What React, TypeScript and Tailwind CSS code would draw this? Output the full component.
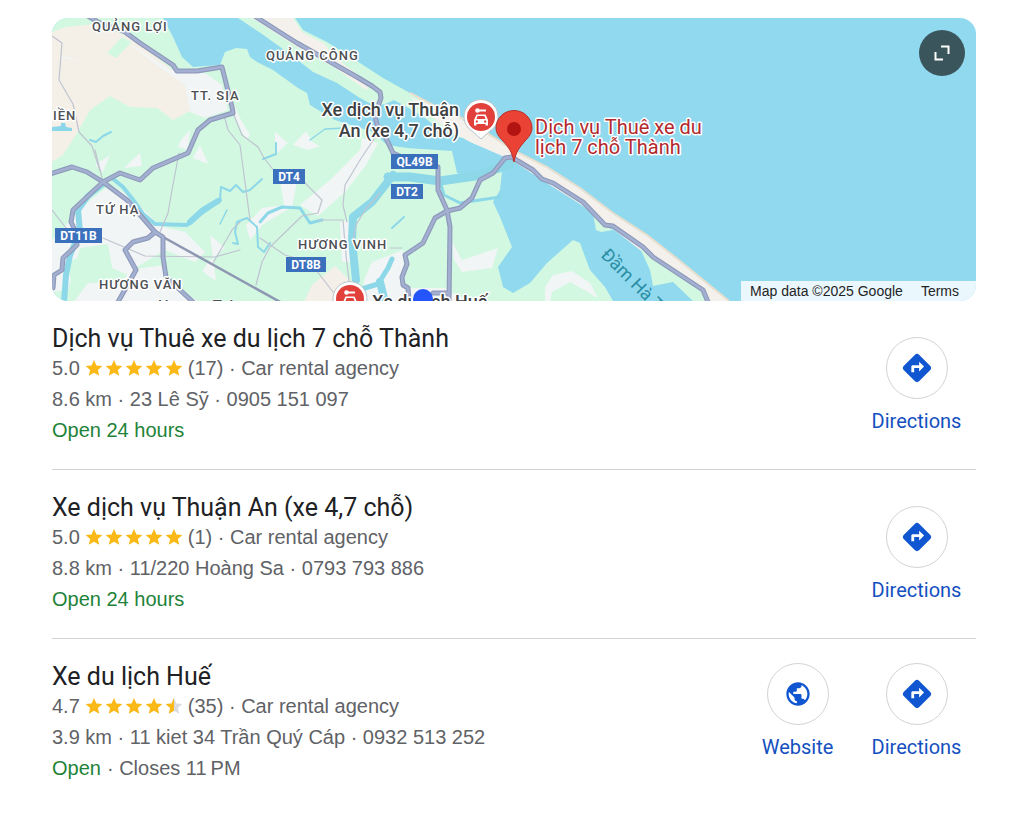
import type { ReactNode } from "react";
import { MdDirections, MdPublic } from "react-icons/md";

const TITLE_FONT = "font-['Roboto','Liberation_Sans',sans-serif]";

type Place = {
  name: string;
  rating: number;
  reviews: number;
  category: string;
  details: string;
  open: string;
  closes?: string;
  website?: boolean;
};

const places: Place[] = [
  {
    name: "Dịch vụ Thuê xe du lịch 7 chỗ Thành",
    rating: 5,
    reviews: 17,
    category: "Car rental agency",
    details: "8.6 km · 23 Lê Sỹ · 0905 151 097",
    open: "Open 24 hours",
  },
  {
    name: "Xe dịch vụ Thuận An (xe 4,7 chỗ)",
    rating: 5,
    reviews: 1,
    category: "Car rental agency",
    details: "8.8 km · 11/220 Hoàng Sa · 0793 793 886",
    open: "Open 24 hours",
  },
  {
    name: "Xe du lịch Huế",
    rating: 4.7,
    reviews: 35,
    category: "Car rental agency",
    details: "3.9 km · 11 kiet 34 Trần Quý Cáp · 0932 513 252",
    open: "Open",
    closes: "Closes 11\u2009PM",
    website: true,
  },
];

const highways = [
  "M88,16 L98,22 125,32 140,43 173,65 177,71 197,71 222,67 227,87 232,107 233,113 210,120 198,130 188,153 153,168 140,180 120,173 103,182 73,210 71,222 75,230 77,245 63,258 62,270 54,275 53,288",
  "M50,174 L72,167 87,172 103,182 127,200 155,232 163,237 163,257 166,277 193,302",
  "M155,232 L148,238 133,242 125,250 136,270 118,302",
  "M256,17 L278,31 297,43 327,60 357,77 372,86 380,92 381,98 375,115 377,125 385,136 393,153 408,160 438,167 438,190 447,210 450,227 449,302",
  "M512,157 L505,158 493,173 480,180 472,198 460,208 447,211 435,218 423,243 405,255 407,264 402,277 403,285 408,288 409,300",
  "M433,293 H449",
  "M513,158 L533,170 542,179 553,183 583,202 605,225 613,226 643,247 653,257 703,290 708,302",
];

const lanes = [
  "M52,36 L62,43 59,80 73,104 79,132 92,146 100,171",
  "M224,115 L228,130 240,145 246,190 250,220",
  "M233,113 L242,135 258,147 264,158 275,172",
  "M179,153 L172,190 168,213 160,232",
  "M103,238 L145,256 215,257 240,250",
  "M213,263 L232,230 240,222",
  "M256,285 L262,262 270,247 302,216 318,213 322,200 308,186 296,172",
  "M318,220 H343 L346,255 350,290",
  "M378,133 L360,160 345,185 343,205 347,222",
  "M260,238 L285,255 310,262 333,292",
  "M380,193 L365,210 356,225 352,245",
  "M95,150 L103,182",
  "M390,248 H402",
  "M52,210 L66,228 M100,236 L90,232",
];

const streams = [
  { d: "M112,178 L123,187 134,201 143,214 155,224 187,225 203,212 220,200", w: 4 },
  { d: "M190,222 L203,210 218,201", w: 6 },
  { d: "M220,200 L221,187 230,191 236,185 243,192 250,190 262,179", w: 2 },
  { d: "M103,184 L88,196 78,210 80,232 70,255 66,275 64,302", w: 6 },
  { d: "M233,243 L238,244 235,232 237,222 247,218 257,227 258,247 264,252 270,243", w: 2 },
  { d: "M260,222 L268,213 282,207 300,208 310,223 322,220", w: 3 },
  { d: "M90,140 L96,142 103,136 111,132", w: 2 },
  { d: "M263,159 L276,154 276,143", w: 2 },
  { d: "M310,140 L325,129 345,128", w: 1.5 },
  { d: "M392,228 L404,217", w: 2 },
  { d: "M220,224 L227,210", w: 1.5 },
  { d: "M393,175 L372,202 353,217 352,240 356,280", w: 8 },
  { d: "M388,177 L410,177 440,181 475,176 510,164", w: 9 },
  { d: "M440,181 L444,195 460,203 500,197", w: 3 },
  { d: "M356,280 L353,292 M362,289 L378,284 388,268 392,259", w: 5 },
  { d: "M380,282 L385,302", w: 8 },
];

const towns = [
  "60,58 64,56 80,60",
  "125,40 170,70 205,73 222,85 228,110 205,118 190,112 185,85 150,60",
  "230,95 240,118 250,135 246,140 236,120",
  "181,140 190,130 188,150 178,147",
  "200,145 208,164 193,158",
  "275,132 288,143 275,155",
  "293,145 306,131 312,142 320,146 308,150",
  "52,240 90,200 110,185 130,196 160,226 185,232 205,252 195,262 165,250 125,274 112,268 108,244 80,248 68,290 52,292",
  "124,168 140,153 142,166",
  "280,180 297,182 292,207 262,225 250,240 246,225 262,208 284,205",
  "300,205 330,180 360,150 362,138 378,143 366,165 345,192 318,216",
  "210,235 225,248 208,262 200,275 216,280",
  "452,242 462,260 498,248 492,268 462,272 454,260",
  "545,302 545,287 553,275 572,271 590,283 598,298 570,282 552,292 550,302",
  "364,280 372,262 403,250 405,288 445,288 470,302 364,302",
  "340,222 350,220 350,262 342,262",
  "74,302 90,280 110,285 130,275 160,280 200,302",
  "95,165 110,155 103,172",
  "128,270 165,265 172,290 150,302 120,302",
];

const greens = [
  "66,262 108,248 112,268 125,274 112,282 72,284",
  "60,184 92,176 100,184 78,202 62,208 52,200 52,186",
  "172,262 196,266 216,282 236,290 250,301 200,301 176,282",
];

function Shield({ x, y, width, text }: { x: number; y: number; width: number; text: string }) {
  return (
    <g>
      <rect x={x} y={y} width={width} height={15} fill="#3b70bd" />
      <text x={x + width / 2} y={y + 12} textAnchor="middle" fontSize={12} fontWeight={700} fill="#fff">
        {text}
      </text>
    </g>
  );
}

function CarMarker({ x, y }: { x: number; y: number }) {
  return (
    <g transform={`translate(${x} ${y})`}>
      <path d="M0,22 L-9,14 A17,17 0 1 1 9,14 Z" fill="#fff" stroke="#b9c5c9" />
      <circle r="14" fill="#e2413b" />
      <g fill="#fff">
        <circle cx="-3.5" cy="-6.5" r="2.3" />
        <path d="M-2,-7.5 H5 V-5.500 H-2 Z" />
        <path
          fillRule="evenodd"
          d="M-4.5,-2.5 H4.5 L7,3 V8.5 H4.5 V7 H-4.5 V8.5 H-7 V3 Z M-3.3,-1 L-4.6,2 H4.6 L3.3,-1 Z M-4.2,3.3 a1.2,1.2 0 1 0 0.01,0 Z M4.2,3.3 a1.2,1.2 0 1 0 0.01,0 Z"
        />
      </g>
    </g>
  );
}

function MapDrawing() {
  return (
    <svg
      viewBox="52 18 924 283"
      preserveAspectRatio="xMidYMid slice"
      role="img"
      aria-label="Map of car rental agencies"
      className="block w-full font-['Roboto',sans-serif]"
    >
      <rect x="52" y="18" width="924" height="283" fill="#91d9ee" />
      <path
        fill="#d2f8e2"
        d="M52,18 H163 L173,37 182,57 193,67 220,65 225,52 236,48 247,49 250,57 257,62 273,70 298,88 307,93 310,105 335,120 373,132 387,145 407,148 452,151 457,173 473,178 502,172 500,190 493,202 500,217 512,247 498,267 503,287 513,293 530,283 547,263 573,240 580,243 590,270 605,287 613,301 H52 Z"
      />
      <path
        fill="#f4f0e8"
        d="M52,32 L66,27 95,24 125,35 150,52 175,72 192,80 210,100 190,111 173,120 157,108 130,107 110,96 90,110 77,133 63,155 52,162 Z"
      />
      <path fill="#d2f8e2" d="M107,53 L122,37 132,42 116,58 Z" />
      <path
        fill="#d2f8e2"
        d="M238,18 H295 L303,30 327,42 360,63 383,78 410,93 433,105 462,119 462,138 440,130 425,118 405,106 394,100 385,104 375,106 360,98 337,83 313,72 290,54 262,34 Z"
      />
      <path
        fill="#f4f1ec"
        d="M252,18 H293 L302,32 325,44 333,56 370,84 366,90 335,68 297,47 Z M410,97 L433,105 470,124 495,138 513,150 547,168 580,189 613,214 647,236 680,262 713,289 729,301 H708 L693,287 653,260 613,229 580,204 542,180 513,161 500,155 470,142 445,128 Z"
      />
      <path fill="#d2f8e2" d="M593,214 L607,227 613,230 601,232 596,230 Z M640,248 L700,288 706,301 H693 L673,282 653,286 650,270 Z" />
      <path
        d="M410,93 L433,105 470,122 513,150 547,167 580,188 613,213 647,235 680,261 713,288 729,301"
        fill="none"
        stroke="#eadfcd"
        strokeWidth="2"
      />
      <path fill="#f5efe9" d="M304,302 L312,285 335,266 360,290 400,302 Z" />
      {towns.map((points) => (
        <polygon key={points} points={points} fill="#f2f5f5" />
      ))}
      {greens.map((points) => (
        <polygon key={points} points={points} fill="#d2f8e2" />
      ))}
      <path fill="#8cd6ea" d="M52,127 L61,126 61,123 65,123 66,127 72,128 72,131 52,131 Z" />

      <g fill="none" strokeLinejoin="round" strokeLinecap="round">
        {streams.map(({ d, w }) => (
          <path key={d} d={d} stroke="#8cd8e8" strokeWidth={w} />
        ))}
        {lanes.map((d) => (
          <path key={d} d={d} stroke="#bfc4d0" strokeWidth="1.2" />
        ))}
        <path d="M163,237 L282,303" stroke="#8f98b3" strokeWidth="2.5" />
        {highways.map((d) => (
          <path key={d} d={d} stroke="#8f9abb" strokeWidth="5" />
        ))}
        {highways.map((d) => (
          <path key={`${d}-fill`} d={d} stroke="#a3b0d1" strokeWidth="2.6" />
        ))}
      </g>

      <g
        fill="#4c5054"
        stroke="#fff"
        strokeWidth="3"
        strokeLinejoin="round"
        paintOrder="stroke"
        fontSize="13"
        fontWeight="500"
        letterSpacing="1"
      >
        <text x="92" y="31">QUẢNG LỢI</text>
        <text x="266" y="60">QUẢNG CÔNG</text>
        <text x="191" y="100">TT. SỊA</text>
        <text x="53" y="120">IỀN</text>
        <text x="96" y="214">TỨ HẠ</text>
        <text x="298" y="249">HƯƠNG VINH</text>
        <text x="99" y="289">HƯƠNG VĂN</text>
        <text x="158" y="311" fontSize="15" strokeWidth="1">Hương Trà</text>
      </g>

      <Shield x={273} y={169} width={32} text="DT4" />
      <Shield x={391} y={154} width={47} text="QL49B" />
      <Shield x={391} y={184} width={32} text="DT2" />
      <Shield x={55} y={228} width={47} text="DT11B" />
      <Shield x={286} y={257} width={40} text="DT8B" />

      <text transform="translate(600 256) rotate(45)" fontSize="18" fill="#2a8ea5">
        Đầm Hà Trung
      </text>

      <CarMarker x={481} y={117} />
      <CarMarker x={350} y={299} />

      <g stroke="#fff" strokeWidth="3" strokeLinejoin="round" paintOrder="stroke">
        <g fill="#3c4043" fontSize="18" fontWeight="500">
          <text x="459" y="116" textAnchor="end">Xe dịch vụ Thuận</text>
          <text x="459" y="137" textAnchor="end">An (xe 4,7 chỗ)</text>
          <text x="372" y="308">Xe du lịch Huế</text>
        </g>
        <g fill="#b3282d" fontSize="20">
          <text x="535" y="134">Dịch vụ Thuê xe du</text>
          <text x="535" y="154">lịch 7 chỗ Thành</text>
        </g>
      </g>
      <circle cx="423" cy="299" r="10" fill="#2455fa" />

      <path
        d="M514,162 C512,151 508,147 503,141 C499,137 496,133 496,128 A18,17.5 0 0 1 532,128 C532,133 529,137 525,141 C520,147 516,151 514,162 Z"
        fill="#ea4335"
        stroke="#b5322a"
      />
      <circle cx="514" cy="129" r="7" fill="#b31412" />
    </svg>
  );
}

const STAR = "M10 1l2.7 6.1 6.6.6-5 4.4 1.5 6.5L10 15.2l-5.8 3.4 1.5-6.5-5-4.4 6.6-.6z";

function Stars({ rating }: { rating: number }) {
  return (
    <span role="img" aria-label={`Rated ${rating} out of 5`} className="mr-1 mb-0.5 ml-1 flex">
      {[0, 1, 2, 3, 4].map((i) => (
        <svg key={i} viewBox="0 0 20 20" className="size-5 px-px" aria-hidden="true">
          <path d={STAR} fill={rating >= i + 1 ? "#fbb917" : "#dadce0"} />
          {rating > i && rating < i + 1 && (
            <path d={STAR} fill="#fbb917" style={{ clipPath: "inset(0 50% 0 0)" }} />
          )}
        </svg>
      ))}
    </span>
  );
}

function Action({ label, icon, href }: { label: string; icon: ReactNode; href: string }) {
  return (
    <a href={href} className="flex w-[119px] flex-col items-center gap-2 text-[#1450c0]">
      <span className="flex size-[62px] items-center justify-center rounded-full border border-[#d2d3d8] text-[#0f56d0]">
        {icon}
      </span>
      <span className={`text-xl leading-7 ${TITLE_FONT}`}>{label}</span>
    </a>
  );
}

function PlaceRow({ place }: { place: Place }) {
  return (
    <li className="flex items-center justify-between border-b border-[#d2d3d6] pt-6 pb-[23px] last:items-start last:border-b-0">
      <div className="text-xl leading-[31px] text-[#5f6266]">
        <h3 className={`text-[25px] leading-7 text-[#202124] ${TITLE_FONT}`}>{place.name}</h3>
        <p className="flex items-center">
          {place.rating.toFixed(1)}
          <Stars rating={place.rating} />
          ({place.reviews}) · {place.category}
        </p>
        <p>{place.details}</p>
        <p>
          <span className="text-[#1e8339]">{place.open}</span>
          {place.closes && <span className="ml-1.5">· {place.closes}</span>}
        </p>
      </div>
      <div className="flex">
        {place.website && <Action label="Website" href="#website" icon={<MdPublic size={28} />} />}
        <Action label="Directions" href="#directions" icon={<MdDirections size={34} />} />
      </div>
    </li>
  );
}

export default function App() {
  return (
    <main className="bg-white pt-[18px] pr-12 pl-[52px] font-['Liberation_Sans',sans-serif]">
      <section className="relative overflow-hidden rounded-2xl">
        <MapDrawing />
        <button
          type="button"
          aria-label="Expand map"
          className="absolute top-3 right-[11px] flex size-[46px] items-center justify-center rounded-full bg-[#3b555d]"
        >
          <svg viewBox="0 0 16 16" className="size-4" fill="none" stroke="#fff" strokeWidth="2" aria-hidden="true">
            <path d="M7 1.5h7.5V9M1.5 7v7.5H9" />
          </svg>
        </button>
        <div className="absolute right-0 bottom-0 flex gap-[18px] bg-[#eaf7fc] pr-[17px] pl-[9px] text-sm leading-5 text-[#1f2427]">
          <span>Map data ©2025 Google</span>
          <a href="#terms">Terms</a>
        </div>
      </section>
      <ul>
        {places.map((place) => (
          <PlaceRow key={place.name} place={place} />
        ))}
      </ul>
    </main>
  );
}
